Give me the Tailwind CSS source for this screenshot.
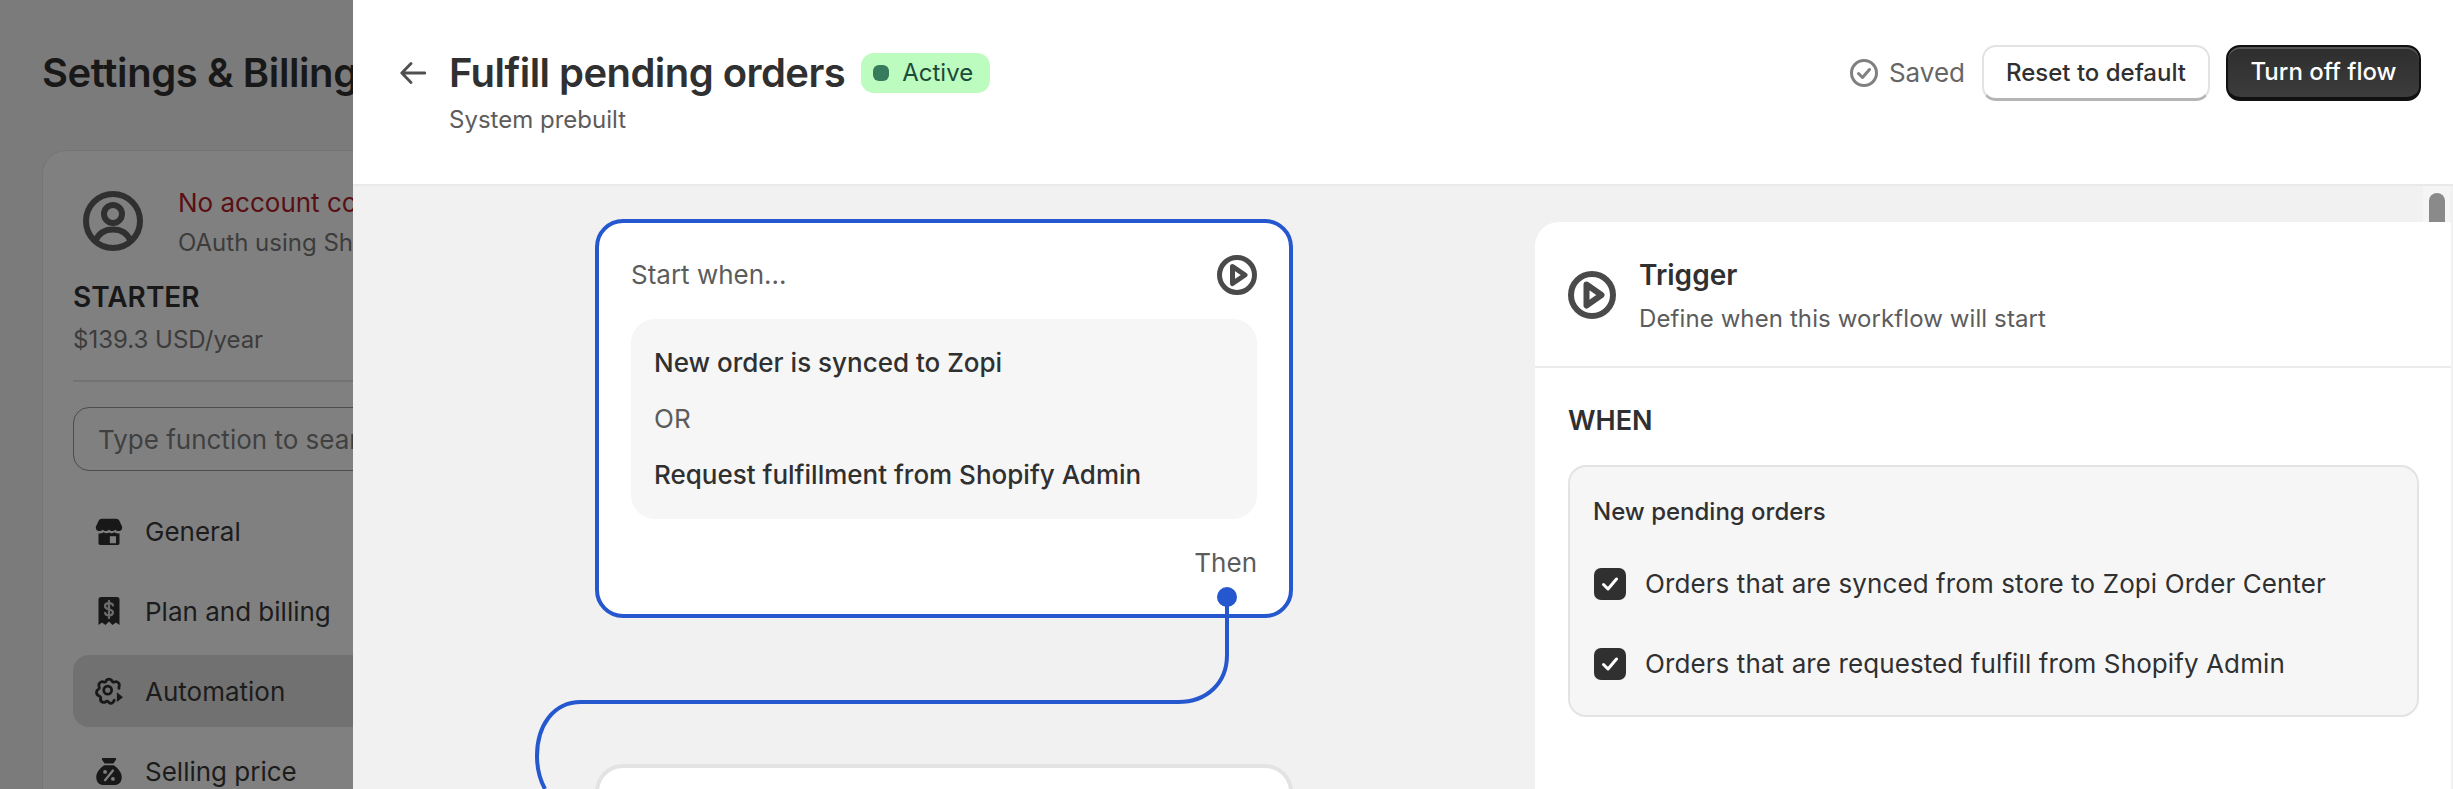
<!DOCTYPE html>
<html lang="en">
<head>
<meta charset="UTF-8">
<title>Fulfill pending orders</title>
<script src="https://cdn.jsdelivr.net/npm/@tailwindcss/browser@4"></script>
</head>
<body class="h-[789px] overflow-hidden font-['Inter',sans-serif] text-[#303030]">
<div class="flex h-[789px] w-[2453px]">

  <!-- page behind the drawer -->
  <aside class="w-[353px] shrink-0 overflow-hidden bg-[#7b7b7b] pl-[42px] pt-[50px] text-[#181818]">
    <h1 class="h-[46px] whitespace-nowrap text-[40px] font-semibold leading-[46px] tracking-[-0.4px]">Settings &amp; Billing</h1>
    <div class="mt-[54px] h-[700px] w-[500px] rounded-tl-[24px] border border-[#747474] bg-[#808080] pl-[30px] pt-[40px]">
      <div class="flex pl-[10px]">
        <svg class="h-[60px] w-[60px] shrink-0" viewBox="0 0 60 60" fill="none" stroke="#303030" stroke-width="6">
          <circle cx="30" cy="30" r="27"/>
          <circle cx="30" cy="23" r="9"/>
          <path d="M12.5 50c3-7.5 9.5-11.500 17.500-11.500S44.500 42.500 47.500 50"/>
        </svg>
        <div class="-mt-[4px] ml-[35px] whitespace-nowrap">
          <p class="text-[26px] leading-[32px] text-[#5a0f14]">No account connected</p>
          <p class="mt-[8px] text-[24px] leading-[32px] text-[#3c3c3c]">OAuth using Shopify</p>
        </div>
      </div>
      <p class="mt-[22px] text-[28px] font-semibold leading-[32px]">STARTER</p>
      <p class="mt-[11px] text-[24px] leading-[32px] text-[#3c3c3c]">$139.3 USD/year</p>
      <div class="mt-[24px] h-[2px] bg-[#737373]"></div>
      <div class="mt-[25px] flex h-[64px] items-center rounded-[16px] border border-[#4c4c4c] pl-[24px] text-[26px] text-[#404040]">Type function to search</div>
      <nav class="mt-[24px] text-[26px] text-[#1c1c1c]">
        <div class="flex h-[72px] items-center gap-[22px] pl-[22px]">
          <svg class="h-[28px] w-[28px] shrink-0" viewBox="0 0 32 32" fill="#181818"><path d="M8 2h16c2 0 3 1 4 2.500l3 6.500c.6 3-1.500 5-4 5-1.700 0-3-.7-3.800-1.800-.9 1.100-2.300 1.800-3.600 1.800-1.400 0-2.700-.7-3.600-1.800-.9 1.100-2.200 1.800-3.600 1.800-1.300 0-2.700-.7-3.600-1.800C8 15.300 6.700 16 5 16c-2.500 0-4.600-2-4-5l3-6.500C5 3 6 2 8 2z"/><path fill-rule="evenodd" d="M4 18.500c2.200.6 4.400.2 6-1 1.700 1.400 4.200 1.500 6 .2 1.800 1.300 4.300 1.200 6-.2 1.600 1.200 3.800 1.600 6 1V30a2 2 0 0 1-2 2H6a2 2 0 0 1-2-2zM17 22v8h7v-8z"/></svg>
          <span>General</span>
        </div>
        <div class="mt-[8px] flex h-[72px] items-center gap-[22px] pl-[22px]">
          <svg class="h-[28px] w-[28px] shrink-0" viewBox="0 0 32 32"><path fill="#181818" d="M7 0h18a3 3 0 0 1 3 3v29l-4-3-4 3-4-4-4 4-4-3-4 3V3a3 3 0 0 1 3-3z"/><path d="M20.500 9.500c-.5-1.800-2.400-2.500-4.500-2.500-2.500 0-4.500 1.200-4.500 3.500 0 4.800 9 2.200 9 7 0 2.300-2 3.500-4.500 3.500-2.200 0-4-.8-4.500-2.700M16 4.500V24" fill="none" stroke="#6c6c6c" stroke-width="2.600" stroke-linecap="round"/></svg>
          <span>Plan and billing</span>
        </div>
        <div class="mt-[8px] flex h-[72px] items-center gap-[22px] rounded-l-[16px] bg-[#717171] pl-[22px]">
          <svg class="h-[28px] w-[28px] shrink-0" viewBox="0 0 32 32" fill="none" stroke="#181818" stroke-width="3.200" stroke-linejoin="round" stroke-linecap="round"><circle cx="14.500" cy="15" r="4.500"/><path d="M22 26.500c-1 2.500-2.500 4-5 3.500-1.500-.4-1.500-2.500-3-2.500s-2.500 2-4.500 1.500c-2.200-.6-3.600-2.300-3-4.500.4-1.500-.8-2.400-2.200-3C2.300 20.500 1.500 18 2 16c.4-1.500 2.300-1.500 2.800-3 .5-1.700-1.300-3.500 0-5.500 1.300-1.800 3.500-2.600 5.200-1.800 1.500.7 2.700-.5 3-2C14.500 2 17.500 2 19 3.700c.4 1.700 1.700 2.700 3.200 2 1.800-.8 4 0 5.200 1.800 1.200 2-.5 3.700 0 5.500"/><path d="M25 17.500l7 5.500-7 5.500z" fill="#181818" stroke="none"/></svg>
          <span>Automation</span>
        </div>
        <div class="mt-[8px] flex h-[72px] items-center gap-[22px] pl-[22px]">
          <svg class="h-[28px] w-[28px] shrink-0" viewBox="0 0 32 32"><path fill="#181818" d="M9 1h14c1 0 1.500 1 1 2l-3 4.500h-10L8 3c-.5-1 0-2 1-2zM10.500 9.500h11C27 13.500 31 18.500 30.500 24c-.4 5-3.500 8-8.500 8H10c-5 0-8.100-3-8.500-8C1 18.500 5 13.500 10.500 9.500z"/><path d="M20.500 15.500l-9 11" stroke="#7f7f7f" stroke-width="2.600" stroke-linecap="round"/><circle cx="11.500" cy="17" r="2.200" fill="#7f7f7f"/><circle cx="20.500" cy="25" r="2.200" fill="#7f7f7f"/></svg>
          <span>Selling price</span>
        </div>
      </nav>
    </div>
  </aside>

  <!-- drawer -->
  <main class="relative flex w-[2100px] shrink-0 flex-col bg-[#f1f1f1]">
    <header class="flex h-[186px] shrink-0 justify-between border-b-2 border-[#e9e9e9] bg-white pl-[47px] pr-[32px]">
      <div class="flex pt-[53px]">
        <svg class="mt-[8px] h-[24px] w-[26px]" viewBox="0 0 26 24" fill="none" stroke="#4f4f4f" stroke-width="2.800" stroke-linecap="round" stroke-linejoin="round"><path d="M25 12H2M11 2.500L1.800 12l9.200 9.500"/></svg>
        <div class="ml-[23px]">
          <div class="flex h-[40px] items-center gap-[16px]">
            <h2 class="whitespace-nowrap text-[40px] font-semibold leading-[40px] tracking-[-0.55px] text-[#303030]">Fulfill pending orders</h2>
            <span class="flex h-[40px] items-center gap-[13px] rounded-[13px] bg-[#bdfcbf] pl-[12px] pr-[17px] text-[24px] text-[#1d4a3a]">
              <i class="h-[16px] w-[16px] rounded-[6px] bg-[#367b5c]"></i>Active
            </span>
          </div>
          <p class="mt-[13px] text-[24px] leading-[28px] text-[#5c5c5c]">System prebuilt</p>
        </div>
      </div>
      <div class="flex items-start pt-[45px]">
        <div class="mt-[13px] flex items-center gap-[11px] text-[26px] leading-[30px] text-[#666]">
          <svg class="h-[28px] w-[28px]" viewBox="0 0 28 28" fill="none" stroke="#808080" stroke-width="3" stroke-linecap="round" stroke-linejoin="round"><circle cx="14" cy="14" r="12.500"/><path d="M8.500 14.500l4 4 7-8"/></svg>
          <span>Saved</span>
        </div>
        <button class="ml-[17px] h-[56px] w-[228px] rounded-[14px] border-2 border-b-[3px] border-[#e3e3e3] border-b-[#b5b5b5] bg-white text-[24px] font-medium text-[#303030]">Reset to default</button>
        <button class="ml-[16px] h-[56px] w-[195px] rounded-[14px] border-2 border-b-[4px] border-[#111] bg-linear-to-b from-[#2e2e2e] to-[#3c3c3c] text-[24px] font-medium text-white shadow-[inset_0_2px_0_#555]">Turn off flow</button>
      </div>
    </header>

    <div class="relative flex flex-1 gap-[242px] overflow-hidden pl-[242px]">
      <section class="relative flex w-[698px] shrink-0 flex-col pt-[33px]">
        <div class="relative h-[399px] shrink-0 rounded-[28px] border-4 border-[#2558cf] bg-white px-[32px]">
          <div class="flex h-[72px] items-end justify-between">
            <span class="pb-[4px] text-[26px] leading-[32px] text-[#5c5c5c]">Start when...</span>
            <svg class="h-[40px] w-[40px]" viewBox="0 0 40 40" fill="none" stroke="#4a4a4a" stroke-width="5" stroke-linejoin="round"><circle cx="20" cy="20" r="17.500"/><path d="M15.500 11.500L28 20l-12.500 8.500z"/></svg>
          </div>
          <div class="mt-[24px] flex h-[200px] flex-col gap-[24px] rounded-[24px] bg-[#f6f6f7] py-[28px] pl-[23px] pr-[24px] text-[26px] leading-[32px]">
            <p class="font-medium">New order is synced to Zopi</p>
            <p class="text-[#5c5c5c]">OR</p>
            <p class="font-medium">Request fulfillment from Shopify Admin</p>
          </div>
          <p class="mt-[28px] text-right text-[26px] leading-[32px] text-[#5c5c5c]">Then</p>
          <span class="absolute bottom-[7px] right-[52px] h-[20px] w-[20px] rounded-full bg-[#2558cf]"></span>
        </div>
        <div class="mt-[146px] h-[300px] shrink-0 rounded-[28px] border-4 border-[#e3e3e3] bg-white"></div>
      </section>

      <section class="w-[916px] shrink-0 pt-[36px]">
        <div class="h-[700px] rounded-tl-[24px] bg-white">
          <div class="flex h-[146px] border-b-2 border-[#ebebeb] pl-[33px]">
            <svg class="mt-[49px] h-[48px] w-[48px]" viewBox="0 0 48 48" fill="none" stroke="#4a4a4a" stroke-width="6" stroke-linejoin="round"><circle cx="24" cy="24" r="21"/><path d="M18.500 13.500L33.500 24l-15 10.500z"/></svg>
            <div class="ml-[23px] pt-[35px]">
              <p class="text-[28px] font-semibold leading-[36px]">Trigger</p>
              <p class="mt-[11px] text-[24px] leading-[30px] tracking-[0.1px] text-[#5c5c5c]">Define when this workflow will start</p>
            </div>
          </div>
          <div class="pl-[33px] pr-[32px] pt-[37px]">
            <p class="text-[27px] font-semibold leading-[32px]">WHEN</p>
            <div class="mt-[28px] h-[252px] w-[851px] rounded-[18px] border-2 border-[#e3e3e3] bg-[#f6f6f7] pl-[24px] pt-[29px]">
              <p class="-ml-px text-[24px] font-medium leading-[32px]">New pending orders</p>
              <div class="mt-[40px] flex h-[32px] items-center gap-[19px]">
                <span class="flex h-[32px] w-[32px] items-center justify-center rounded-[7px] bg-[#303030]"><svg class="h-[20px] w-[20px]" viewBox="0 0 20 20" fill="none" stroke="#fff" stroke-width="3" stroke-linecap="round" stroke-linejoin="round"><path d="M3.500 10.500l4.500 4.500 8.500-10"/></svg></span>
                <span class="text-[26px] leading-[32px] tracking-[0.1px]">Orders that are synced from store to Zopi Order Center</span>
              </div>
              <div class="mt-[48px] flex h-[32px] items-center gap-[19px]">
                <span class="flex h-[32px] w-[32px] items-center justify-center rounded-[7px] bg-[#303030]"><svg class="h-[20px] w-[20px]" viewBox="0 0 20 20" fill="none" stroke="#fff" stroke-width="3" stroke-linecap="round" stroke-linejoin="round"><path d="M3.500 10.500l4.500 4.500 8.500-10"/></svg></span>
                <span class="text-[26px] leading-[32px] tracking-[0.1px]">Orders that are requested fulfill from Shopify Admin</span>
              </div>
            </div>
          </div>
        </div>
      </section>

      <!-- connector between flow nodes -->
      <svg class="absolute left-[150px] top-[396px] h-[207px] w-[740px]" viewBox="0 0 740 207" fill="none" stroke="#2558cf" stroke-width="4">
        <path d="M724 15V73c0 28-20 47-49 47H78c-28 0-44 24-44 54c0 12 2 22 8 33"/>
      </svg>
      <!-- scrollbar track and thumb, cut off by the trigger card's top edge -->
      <div class="absolute right-[3px] top-0 flex h-[36px] w-[27px] justify-center bg-[#f5f5f5] pt-[7px]">
        <div class="h-[29px] w-[16px] rounded-t-full bg-[#8a8a8a]"></div>
      </div>
    </div>
  </main>
</div>
</body>
</html>
